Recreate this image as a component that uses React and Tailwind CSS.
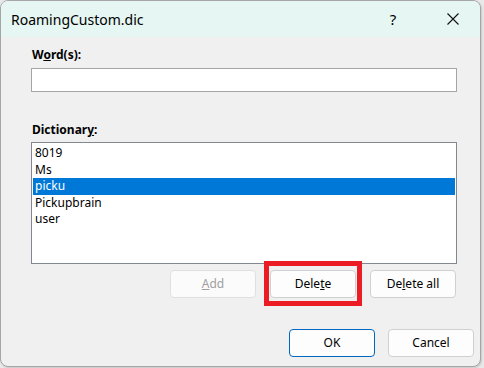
import { useState } from 'react';

const words = ['8019', 'Ms', 'picku', 'Pickupbrain', 'user'];

function Btn({ children, disabled, primary, className = '' }) {
  return (
    <button
      type="button"
      disabled={disabled}
      className={
        'h-[28px] w-[86px] rounded-[4px] border text-[12px] leading-none flex items-center justify-center ' +
        (disabled
          ? 'bg-[#fbfbfb] border-[#e0e0e0] text-[#a0a0a0] '
          : primary
          ? 'bg-[#fdfdfd] border-[#0067c0] text-black '
          : 'bg-[#fdfdfd] border-[#d0d0d0] text-black ') +
        className
      }
    >
      {children}
    </button>
  );
}

export default function App() {
  const [selected, setSelected] = useState('picku');

  return (
    <div
      className="w-[484px] h-[368px] bg-[#e9e9e9] overflow-hidden"
      style={{ fontFamily: '"Noto Sans", "Segoe UI", sans-serif' }}
    >
      <div className="w-[481px] h-[367px] flex flex-col rounded-[8px] border border-[#a6a6a6] bg-[#f0f0f0] overflow-hidden shadow-[1px_1px_2px_rgba(0,0,0,0.15)]">
        {/* Title bar */}
        <div className="h-[36px] shrink-0 bg-[#e6f6f2] flex items-center pl-[10px] text-[14px] text-black">
          <span className="flex-1">RoamingCustom.dic</span>
          <span className="w-[14px] text-center mr-[47px] text-[15px]">?</span>
          <svg width="12" height="12" viewBox="0 0 12 12" className="mr-[21px]">
            <path d="M0.5 0.5 L11.5 11.5 M11.5 0.5 L0.5 11.5" stroke="#111" strokeWidth="1.1" fill="none" />
          </svg>
        </div>

        {/* Body */}
        <div className="flex flex-col pl-[30px] pr-[23px] pt-[10px] text-[12px] text-black">
          <label className="font-bold leading-[16px] pl-[1px]">
            W<u>o</u>rd(s):
          </label>
          <input
            type="text"
            className="mt-[5px] h-[24px] w-full bg-white border border-[#a5a5a5] outline-none px-1"
          />

          <label className="mt-[30px] font-bold leading-[16px] pl-[1px]">
            Dictionar<u>y</u>:
          </label>
          <div className="mt-[4px] h-[122px] bg-white border border-[#828790] px-[1px] pt-[2px]">
            {words.map((w) => (
              <div
                key={w}
                onClick={() => setSelected(w)}
                className={
                  'h-[16.5px] leading-[16.5px] pl-[2px] ' +
                  (selected === w ? 'bg-[#0078d7] text-white' : 'text-black')
                }
              >
                {w}
              </div>
            ))}
          </div>

          <div className="mt-[6px] flex justify-end gap-[14px] pr-[1px]">
            <Btn disabled>
              <u>A</u>dd
            </Btn>
            <div className="relative">
              <Btn>
                Dele<u>t</u>e
              </Btn>
              <div className="absolute left-[-6px] top-[-9px] w-[98px] h-[45px] border-[5px] border-[#ec1c24] pointer-events-none" />
            </div>
            <Btn>
              De<u>l</u>ete all
            </Btn>
          </div>
        </div>

        {/* Footer */}
        <div className="mt-[31px] flex justify-end gap-[13px] pr-[6px]">
          <Btn primary>OK</Btn>
          <Btn>Cancel</Btn>
        </div>
      </div>
    </div>
  );
}
